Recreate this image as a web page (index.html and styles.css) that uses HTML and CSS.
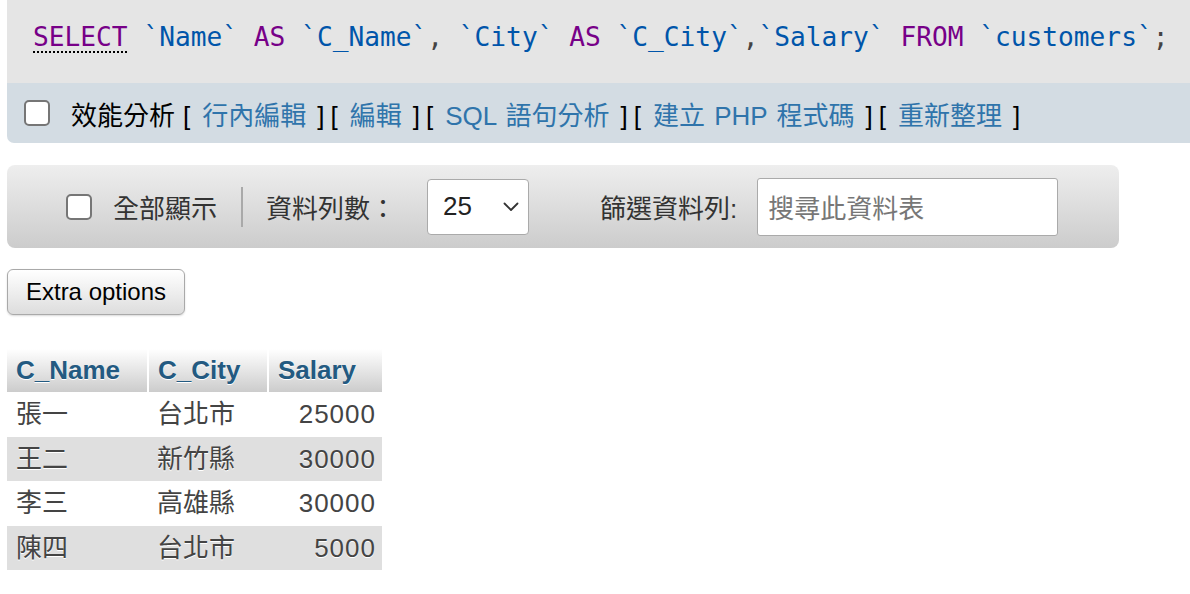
FILE: index.html
```html
<!DOCTYPE html>
<html lang="zh-Hant">
<head>
<meta charset="utf-8">
<title>SQL result</title>
<link rel="stylesheet" href="styles.css">
</head>
<body>
<div class="sqlbox">
  <div class="sql"><span class="kw kw-first">SELECT</span> <span class="id">`Name`</span> <span class="kw">AS</span> <span class="id">`C_Name`</span><span class="pn">,</span> <span class="id">`City`</span> <span class="kw">AS</span> <span class="id">`C_City`</span><span class="pn">,</span><span class="id">`Salary`</span> <span class="kw">FROM</span> <span class="id">`customers`</span><span class="pn">;</span></div>
  <div class="tools">
    <input type="checkbox" class="chk">
    <span class="tools-text">效能分析<span class="bl">[</span><a href="#">行內編輯</a><span class="br">]</span><span class="bl">[</span><a href="#">編輯</a><span class="br">]</span><span class="bl">[</span><a href="#">SQL 語句分析</a><span class="br">]</span><span class="bl">[</span><a href="#">建立 PHP 程式碼</a><span class="br">]</span><span class="bl">[</span><a href="#">重新整理</a><span class="br">]</span></span>
  </div>
</div>

<div class="navbar">
  <input type="checkbox" class="chk">
  <span class="nav-label showall">全部顯示</span>
  <span class="sep"></span>
  <span class="nav-label rows">資料列數：</span>
  <div class="select"><span>25</span><svg class="chev" width="16" height="10" viewBox="0 0 16 10"><path d="M1.5 1.5 L8 8 L14.5 1.5" fill="none" stroke="#333" stroke-width="1.8" stroke-linecap="round" stroke-linejoin="round"/></svg></div>
  <span class="nav-label filter">篩選資料列:</span>
  <div class="search">搜尋此資料表</div>
</div>

<button class="extra">Extra options</button>

<table class="data">
  <thead>
    <tr><th class="c1">C_Name</th><th class="c2">C_City</th><th class="c3">Salary</th></tr>
  </thead>
  <tbody>
    <tr><td>張一</td><td>台北市</td><td class="num">25000</td></tr>
    <tr class="odd"><td>王二</td><td>新竹縣</td><td class="num">30000</td></tr>
    <tr><td>李三</td><td>高雄縣</td><td class="num">30000</td></tr>
    <tr class="odd"><td>陳四</td><td>台北市</td><td class="num">5000</td></tr>
  </tbody>
</table>
</body>
</html>
```

FILE: styles.css
```css
html, body {
  margin: 0;
  padding: 0;
  background: #fff;
}
body {
  font-family: "Liberation Sans", Arial, "Noto Sans CJK TC", sans-serif;
  color: #444;
  font-size: 26px;
  width: 1190px;
  overflow: hidden;
}

.sqlbox {
  margin-left: 7px;
  border-bottom-left-radius: 7px;
  overflow: hidden;
}
.sql {
  height: 83px;
  box-sizing: border-box;
  background: #e5e5e5;
  padding: 21px 0 0 26px;
  font-family: "DejaVu Sans Mono", monospace;
  font-size: 26.2px;
  line-height: 32px;
  white-space: nowrap;
  color: #333;
}
.kw { color: #770088; }
.id { color: #0055aa; }
.pn { color: #444; }
.kw-first {
  text-decoration: underline dotted #000;
  text-decoration-thickness: 2px;
  text-underline-offset: 5px;
}

.tools {
  height: 60px;
  background: #d3dce3;
  display: flex;
  align-items: center;
  padding-left: 17px;
  color: #000;
}
.tools-text {
  margin-left: 21px;
  white-space: nowrap;
}
.tools a {
  color: #2f74ab;
  text-decoration: none;
  word-spacing: 2px;
}
.bl { margin: 0 12px 0 8px; }
.br { margin-left: 11px; }
.br + .bl { margin-left: 6px; }

.chk {
  appearance: none;
  -webkit-appearance: none;
  width: 26px;
  height: 26px;
  margin: 0;
  box-sizing: border-box;
  border: 2px solid #767676;
  border-radius: 5px;
  background: #fff;
  flex: none;
}

.navbar {
  margin: 22px 0 0 7px;
  width: 1112px;
  height: 83px;
  box-sizing: border-box;
  border-radius: 8px;
  background: linear-gradient(#eeeeee, #cccccc);
  display: flex;
  align-items: center;
  padding-left: 59px;
  color: #333;
}
.nav-label { white-space: nowrap; }
.showall { margin-left: 21px; }
.sep {
  width: 2px;
  height: 40px;
  background: #a9a9a9;
  margin: 0 23px 0 24px;
}
.select {
  margin-left: 31px;
  width: 102px;
  height: 56px;
  box-sizing: border-box;
  background: #fff;
  border: 1px solid #aaa;
  border-radius: 4px;
  display: flex;
  align-items: center;
  justify-content: space-between;
  padding: 0 9px 0 15px;
  color: #222;
}
.chev { display: block; }
.filter { margin-left: 71px; }
.search {
  margin-left: 20px;
  width: 301px;
  height: 58px;
  box-sizing: border-box;
  background: #fff;
  border: 1px solid #aaa;
  border-radius: 3px;
  display: flex;
  align-items: center;
  padding-left: 10px;
  color: #777;
}

.extra {
  display: block;
  margin: 21px 0 0 7px;
  width: 178px;
  height: 46px;
  box-sizing: border-box;
  border: 1px solid #a9a9a9;
  border-radius: 6px;
  background: linear-gradient(#ffffff, #dddddd);
  box-shadow: 0 1px 2px rgba(0,0,0,0.15);
  font-family: "Liberation Sans", Arial, sans-serif;
  font-size: 24px;
  color: #000;
  padding: 0;
}

.data {
  margin: 34px 0 0 7px;
  border-collapse: collapse;
  border-spacing: 0;
}
.data th {
  height: 43px;
  box-sizing: border-box;
  padding: 0 9px;
  text-align: left;
  font-weight: bold;
  color: #235a81;
  text-shadow: 0 1px 0 #fff;
  background: linear-gradient(#ffffff, #cccccc);
  border-right: 2px solid #fff;
  line-height: 43px;
}
.data th.c1 { width: 141px; }
.data th.c2 { width: 120px; }
.data th.c3 { width: 114px; border-right: none; }
.data td {
  height: 44.5px;
  box-sizing: border-box;
  padding: 0 7px 0 9px;
  line-height: 44px;
  white-space: nowrap;
  color: #444;
  text-shadow: 0 1px 0 #fff;
}
.data td.num {
  text-align: right;
  letter-spacing: 1px;
  padding-right: 6px;
}
.data tr.odd td { background: #dfdfdf; }
```
